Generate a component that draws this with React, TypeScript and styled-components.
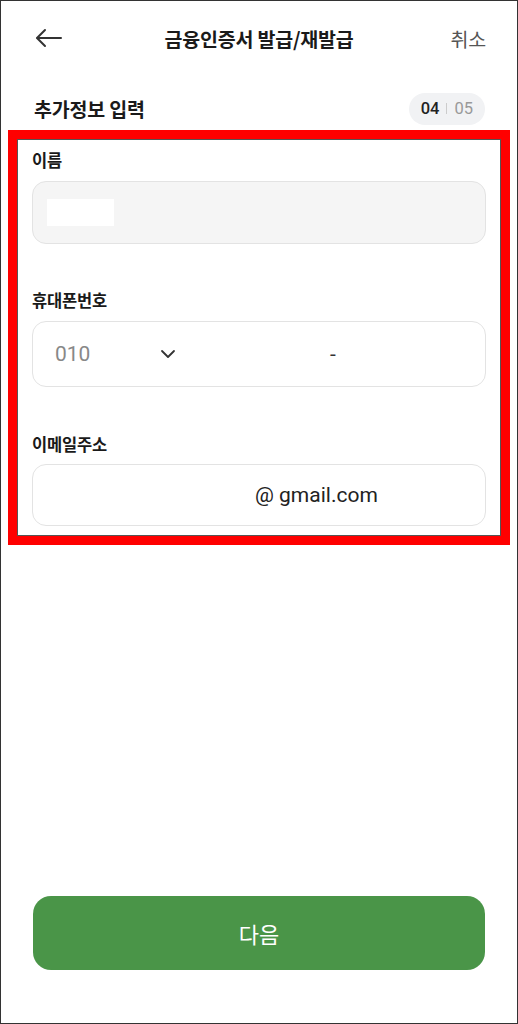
import React from "react";
import styled, { createGlobalStyle } from "styled-components";

const Global = createGlobalStyle`
  html, body { margin: 0; padding: 0; background: #fff; }
  body { font-family: "Noto Sans CJK KR", "Noto Sans", sans-serif; }
  * { box-sizing: border-box; }
`;

const Page = styled.div`
  width: 518px;
  height: 1024px;
  border: 1px solid #333;
  background: #fff;
  display: flex;
  flex-direction: column;
  color: #111;
`;

const Header = styled.header`
  height: 75px;
  display: flex;
  align-items: center;
  justify-content: space-between;
  padding: 0 31px 0 34px;
  position: relative;
`;

const BackButton = styled.button`
  border: 0;
  background: none;
  padding: 0;
  display: flex;
  align-items: center;
  width: 28px;
  height: 28px;
  margin-top: -1px;
`;

const Title = styled.h1`
  position: absolute;
  left: 0;
  right: 0;
  text-align: center;
  margin: 0;
  font-size: 19.5px;
  font-weight: 700;
  letter-spacing: -0.2px;
  pointer-events: none;
  color: #1a1a1a;
`;

const Cancel = styled.span`
  font-size: 19.5px;
  color: #555;
  letter-spacing: -0.2px;
`;

const SectionRow = styled.div`
  display: flex;
  align-items: center;
  justify-content: space-between;
  padding: 0 32px 0 33px;
  margin-top: 16px;
  height: 33px;
`;

const SectionTitle = styled.h2`
  margin: 0;
  font-size: 19.5px;
  font-weight: 700;
  letter-spacing: -0.2px;
  color: #1a1a1a;
`;

const StepBadge = styled.div`
  height: 32px;
  padding: 0 12px;
  border-radius: 16px;
  background: #f1f2f4;
  display: flex;
  align-items: center;
  gap: 7px;
  font-family: "Roboto", "Noto Sans", sans-serif;
  font-size: 16.5px;
`;

const StepCurrent = styled.span`
  color: #222;
  font-weight: 500;
`;

const StepDivider = styled.span`
  width: 1px;
  height: 11px;
  background: #ccc;
`;

const StepTotal = styled.span`
  color: #999;
`;

const Highlight = styled.section`
  margin: 5px 7px 0 7px;
  border: 9px solid #ff0000;
  box-shadow: inset 0 0 0 1px #555;
  padding: 10px 15px 10px 15px;
  display: flex;
  flex-direction: column;
`;

const Field = styled.div<{ $top: number }>`
  display: flex;
  flex-direction: column;
  margin-top: ${(p) => p.$top}px;
`;

const Label = styled.label<{ $gap: number }>`
  font-size: 16.5px;
  font-weight: 700;
  line-height: 22px;
  color: #1a1a1a;
  margin-bottom: ${(p) => p.$gap}px;
  letter-spacing: -0.2px;
`;

const InputBox = styled.div<{ $h: number; $disabled?: boolean }>`
  height: ${(p) => p.$h}px;
  border: 1px solid #e3e3e3;
  border-radius: 14px;
  background: ${(p) => (p.$disabled ? "#f5f5f5" : "#fff")};
  display: flex;
  align-items: center;
  padding: 0 14px;
  font-family: "Roboto", "Noto Sans", sans-serif;
  font-size: 21px;
`;

const Redact = styled.div`
  width: 67px;
  height: 27px;
  background: #fff;
`;

const Prefix = styled.div`
  width: 137px;
  display: flex;
  align-items: center;
  justify-content: space-between;
  padding: 0 8px;
  color: #888;
`;

const Dash = styled.span`
  margin-left: 146px;
  color: #333;
`;

const Domain = styled.span`
  margin-left: 208px;
  color: #222;
`;

const Spacer = styled.div`
  flex: 1;
`;

const NextButton = styled.button`
  margin: 0 32px 53px 32px;
  height: 74px;
  border: 0;
  border-radius: 18px;
  background: #4a9548;
  color: #fff;
  font-family: "Noto Sans CJK KR", sans-serif;
  font-size: 22px;
  font-weight: 400;
`;

export default function App() {
  return (
    <>
      <Global />
      <Page>
        <Header>
          <BackButton aria-label="뒤로">
            <svg width="28" height="20" viewBox="0 0 28 20" fill="none" stroke="#333" strokeWidth="2" strokeLinecap="round" strokeLinejoin="round">
              <path d="M26 10H2.5" />
              <path d="M10 2L2 10l8 8" />
            </svg>
          </BackButton>
          <Title>금융인증서 발급/재발급</Title>
          <Cancel>취소</Cancel>
        </Header>
        <SectionRow>
          <SectionTitle>추가정보 입력</SectionTitle>
          <StepBadge>
            <StepCurrent>04</StepCurrent>
            <StepDivider />
            <StepTotal>05</StepTotal>
          </StepBadge>
        </SectionRow>
        <Highlight>
          <Field $top={0}>
            <Label $gap={10}>이름</Label>
            <InputBox $h={63} $disabled>
              <Redact />
            </InputBox>
          </Field>
          <Field $top={45}>
            <Label $gap={10}>휴대폰번호</Label>
            <InputBox $h={66}>
              <Prefix>
                <span>010</span>
                <svg width="16" height="10" viewBox="0 0 16 10" fill="none" stroke="#333" strokeWidth="1.8" strokeLinecap="round" strokeLinejoin="round">
                  <path d="M2 2l6 6 6-6" />
                </svg>
              </Prefix>
              <Dash>-</Dash>
            </InputBox>
          </Field>
          <Field $top={46}>
            <Label $gap={9}>이메일주소</Label>
            <InputBox $h={62}>
              <Domain>@ gmail.com</Domain>
            </InputBox>
          </Field>
        </Highlight>
        <Spacer />
        <NextButton>다음</NextButton>
      </Page>
    </>
  );
}
